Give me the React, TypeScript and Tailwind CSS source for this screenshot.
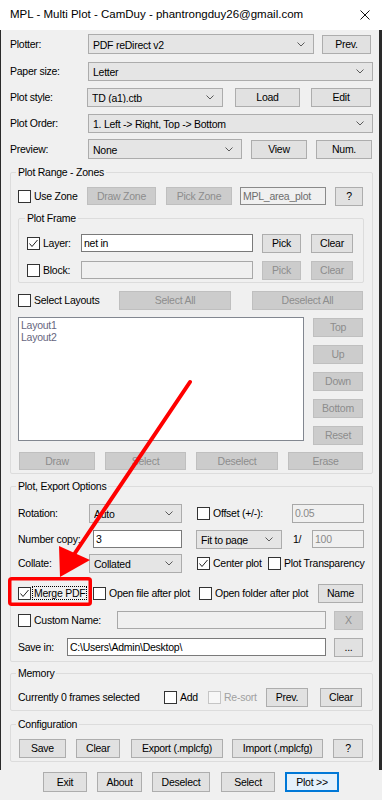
import React from "react";

type Kids = { children?: React.ReactNode };

function Btn({
  w,
  h = "h-[19px]",
  disabled,
  className = "",
  children,
}: Kids & { w: string; h?: string; disabled?: boolean; className?: string }) {
  return (
    <button
      type="button"
      className={`${w} ${h} ${className} flex shrink-0 items-center justify-center border leading-none ${
        disabled
          ? "border-[#bfbfbf] bg-[#cccccc] text-[#8d8d8d]"
          : "border-[#adadad] bg-[#e1e1e1] text-black"
      }`}
    >
      {children}
    </button>
  );
}

function Combo({ w, h = "h-[19px]", text }: { w: string; h?: string; text: string }) {
  return (
    <div className={`${w} ${h} flex shrink-0 items-center border border-[#acacac] bg-[#e5e5e5] pl-[4px] pr-[8px]`}>
      <span className="flex-1 truncate pt-[2px] leading-none">{text}</span>
      <svg width="8" height="5" viewBox="0 0 8 5" className="shrink-0">
        <polyline points="0.5,0.5 4,4 7.5,0.5" fill="none" stroke="#5a5a5a" strokeWidth="1" />
      </svg>
    </div>
  );
}

function TextBox({
  w,
  h = "h-[18px]",
  text = "",
  disabled,
}: {
  w: string;
  h?: string;
  text?: string;
  disabled?: boolean;
}) {
  return (
    <div
      className={`${w} ${h} flex shrink-0 items-center border pl-[2px] leading-none ${
        disabled ? "border-[#a8a8a8] bg-[#f0f0f0] text-[#8a8a8a]" : "border-[#7a7a7a] bg-white text-black"
      }`}
    >
      {text}
    </div>
  );
}

function Check({ checked, disabled }: { checked?: boolean; disabled?: boolean }) {
  return (
    <span
      className={`flex h-[13px] w-[13px] shrink-0 items-center justify-center border ${
        disabled ? "border-[#c5c5c5] bg-[#f7f7f7]" : "border-[#333333] bg-white"
      }`}
    >
      {checked && (
        <svg width="11" height="11" viewBox="0 0 11 11">
          <polyline points="1.5,5.5 4,8.5 9.5,2" fill="none" stroke="#222" strokeWidth="1" />
        </svg>
      )}
    </span>
  );
}

function CheckLabel({
  w = "",
  label,
  checked,
  disabled,
  focus,
}: {
  w?: string;
  label: string;
  checked?: boolean;
  disabled?: boolean;
  focus?: boolean;
}) {
  return (
    <div className={`${w} flex shrink-0 items-center`}>
      <Check checked={checked} disabled={disabled} />
      {focus ? (
        <span className="ml-[1px] border border-dotted border-black px-[1px] leading-[12px]">{label}</span>
      ) : (
        <span className={`ml-[3px] leading-none ${disabled ? "text-[#a0a0a0]" : ""}`}>{label}</span>
      )}
    </div>
  );
}

function Group({ title, className = "", children }: Kids & { title: string; className?: string }) {
  return (
    <fieldset className={`rounded-[2px] border border-[#dcdcdc] ${className}`}>
      <legend className="-ml-[2px] px-[2px] leading-[12px]">{title}</legend>
      {children}
    </fieldset>
  );
}

function Label({ w, children }: Kids & { w: string }) {
  return <span className={`${w} shrink-0 leading-none`}>{children}</span>;
}

export default function App() {
  return (
    <div className="relative h-[800px] w-[382px] overflow-hidden bg-[#f0f0f0] font-['Liberation_Sans',Arial,sans-serif] text-[10.5px] tracking-[-0.25px] text-black">
      {/* title bar */}
      <div className="flex h-[30px] items-center bg-white pl-[10px] pr-[12px] text-[11.5px] tracking-normal">
        <span>MPL - Multi Plot - CamDuy - phantrongduy26@gmail.com</span>
        <svg width="10" height="10" viewBox="0 0 10 10" className="ml-auto">
          <path d="M0.5 0.5 L9.5 9.5 M9.5 0.5 L0.5 9.5" stroke="#111" strokeWidth="1" />
        </svg>
      </div>

      <div className="flex h-[740px] flex-col border-l border-r-[3px] border-[#2a2a2a] pl-[9px]">
        {/* plotter settings */}
        <div className="mt-[4px] flex h-[20px] items-center">
          <Label w="w-[78px]">Plotter:</Label>
          <Combo w="w-[226px]" h="h-[20px]" text="PDF reDirect v2" />
          <Btn w="w-[49px]" className="ml-[8px]">Prev.</Btn>
        </div>
        <div className="mt-[7px] flex h-[20px] items-center">
          <Label w="w-[78px]">Paper size:</Label>
          <Combo w="w-[285px]" text="Letter" />
        </div>
        <div className="mt-[6px] flex h-[20px] items-center">
          <Label w="w-[77px]">Plot style:</Label>
          <Combo w="w-[136px]" text="TD (a1).ctb" />
          <Btn w="w-[65px]" className="ml-[12px]">Load</Btn>
          <Btn w="w-[60px]" className="ml-[11px]">Edit</Btn>
        </div>
        <div className="mt-[6px] flex h-[20px] items-center">
          <Label w="w-[78px]">Plot Order:</Label>
          <Combo w="w-[285px]" text="1. Left -> Right, Top -> Bottom" />
        </div>
        <div className="mt-[6px] flex h-[20px] items-center">
          <Label w="w-[78px]">Preview:</Label>
          <Combo w="w-[154px]" h="h-[20px]" text="None" />
          <Btn w="w-[56px]" className="ml-[9px]">View</Btn>
          <Btn w="w-[56px]" className="ml-[9px]">Num.</Btn>
        </div>

        {/* Plot Range - Zones */}
        <Group title="Plot Range - Zones" className="mt-[7px] w-[363px] px-[7px] pb-[3px]">
          <div className="mt-[8px] flex h-[20px] items-center">
            <CheckLabel w="w-[69px]" label="Use Zone" />
            <Btn w="w-[69px]" h="h-[18px]" disabled>Draw Zone</Btn>
            <Btn w="w-[66px]" h="h-[18px]" disabled className="ml-[10px]">Pick Zone</Btn>
            <div className="ml-[8px] flex h-[18px] w-[86px] shrink-0 items-center border border-[#8a8a8a] bg-[#f0f0f0] pl-[2px] leading-none text-[#6d6d6d]">
              MPL_area_plot
            </div>
            <Btn w="w-[28px]" className="ml-[9px]">?</Btn>
          </div>

          <Group title="Plot Frame" className="mt-[6px] w-[346px] px-[8px] pb-[2px]">
            <div className="mt-[9px] flex h-[20px] items-center">
              <CheckLabel w="w-[54px]" label="Layer:" checked />
              <TextBox w="w-[172px]" text="net in" />
              <Btn w="w-[39px]" className="ml-[9px]">Pick</Btn>
              <Btn w="w-[42px]" className="ml-[10px]">Clear</Btn>
            </div>
            <div className="mt-[7px] flex h-[20px] items-center">
              <CheckLabel w="w-[54px]" label="Block:" />
              <TextBox w="w-[172px]" disabled />
              <Btn w="w-[39px]" disabled className="ml-[9px]">Pick</Btn>
              <Btn w="w-[42px]" disabled className="ml-[10px]">Clear</Btn>
            </div>
          </Group>

          <div className="mt-[7px] flex h-[20px] items-center">
            <CheckLabel w="w-[101px]" label="Select Layouts" />
            <Btn w="w-[112px]" disabled>Select All</Btn>
            <Btn w="w-[111px]" disabled className="ml-[21px]">Deselect All</Btn>
          </div>

          <div className="mt-[7px] flex">
            <div className="h-[124px] w-[286px] shrink-0 border border-[#828790] bg-white px-[2px] pt-[1px] leading-[12px] text-[#66667e]">
              <div>Layout1</div>
              <div>Layout2</div>
            </div>
            <div className="ml-[9px] mt-[1px] flex flex-col gap-[8px]">
              <Btn w="w-[50px]" disabled>Top</Btn>
              <Btn w="w-[50px]" disabled>Up</Btn>
              <Btn w="w-[50px]" disabled>Down</Btn>
              <Btn w="w-[50px]" disabled>Bottom</Btn>
              <Btn w="w-[50px]" disabled>Reset</Btn>
            </div>
          </div>

          <div className="mt-[7px] flex h-[18px] items-center">
            <Btn w="w-[76px]" h="h-[18px]" disabled className="ml-[1px]">Draw</Btn>
            <Btn w="w-[81px]" h="h-[18px]" disabled className="ml-[10px]">Select</Btn>
            <Btn w="w-[82px]" h="h-[18px]" disabled className="ml-[10px]">Deselect</Btn>
            <Btn w="w-[75px]" h="h-[18px]" disabled className="ml-[10px]">Erase</Btn>
          </div>
        </Group>

        {/* Plot, Export Options */}
        <Group title="Plot, Export Options" className="mt-[6px] w-[363px] px-[7px] pb-[4px]">
          <div className="mt-[11px] flex h-[20px] items-center">
            <Label w="w-[71px]">Rotation:</Label>
            <Combo w="w-[93px]" text="Auto" />
            <div className="ml-[15px]">
              <CheckLabel w="w-[95px]" label="Offset (+/-):" />
            </div>
            <TextBox w="w-[72px]" h="h-[19px]" text="0.05" disabled />
          </div>
          <div className="mt-[6px] flex h-[20px] items-center">
            <Label w="w-[75px]">Number copy:</Label>
            <TextBox w="w-[89px]" text="3" />
            <div className="ml-[14px]">
              <Combo w="w-[86px]" text="Fit to page" />
            </div>
            <span className="ml-[11px] w-[19px] leading-none">1/</span>
            <TextBox w="w-[52px]" text="100" disabled />
          </div>
          <div className="mt-[4px] flex h-[20px] items-center">
            <Label w="w-[71px]">Collate:</Label>
            <Combo w="w-[93px]" text="Collated" />
            <div className="ml-[15px]">
              <CheckLabel w="w-[71px]" label="Center plot" checked />
            </div>
            <CheckLabel label="Plot Transparency" />
          </div>
          <div className="mt-[10px] flex h-[20px] items-center">
            <CheckLabel w="w-[75px]" label="Merge PDF" checked focus />
            <CheckLabel w="w-[106px]" label="Open file after plot" />
            <CheckLabel label="Open folder after plot" />
            <Btn w="w-[45px]" className="ml-auto mr-[2px]">Name</Btn>
          </div>
          <div className="mt-[7px] flex h-[20px] items-center">
            <CheckLabel w="w-[99px]" label="Custom Name:" />
            <TextBox w="w-[209px]" disabled />
            <Btn w="w-[29px]" disabled className="ml-[8px]">X</Btn>
          </div>
          <div className="mt-[7px] flex h-[20px] items-center">
            <Label w="w-[49px]">Save in:</Label>
            <TextBox w="w-[259px]" text="C:\Users\Admin\Desktop\" />
            <Btn w="w-[29px]" className="ml-[8px]">...</Btn>
          </div>
        </Group>

        {/* Memory */}
        <Group title="Memory" className="mt-[5px] w-[363px] px-[7px] pb-[3px]">
          <div className="mt-[9px] flex h-[19px] items-center">
            <Label w="w-[146px]">Currently 0 frames selected</Label>
            <CheckLabel w="w-[44px]" label="Add" />
            <CheckLabel w="w-[58px]" label="Re-sort" disabled />
            <Btn w="w-[42px]">Prev.</Btn>
            <Btn w="w-[42px]" className="ml-[12px]">Clear</Btn>
          </div>
        </Group>

        {/* Configuration */}
        <Group title="Configuration" className="mt-[7px] w-[363px] px-[7px] pb-[3px]">
          <div className="mt-[9px] flex h-[19px] items-center">
            <Btn w="w-[47px]" className="ml-[1px]">Save</Btn>
            <Btn w="w-[44px]" className="ml-[10px]">Clear</Btn>
            <Btn w="w-[92px]" className="ml-[11px]">Export (.mplcfg)</Btn>
            <Btn w="w-[91px]" className="ml-[9px]">Import (.mplcfg)</Btn>
            <Btn w="w-[30px]" className="ml-[10px]">?</Btn>
          </div>
        </Group>
      </div>

      {/* dialog buttons */}
      <div className="flex pl-[43px] pt-[2px]">
        <Btn w="w-[44px]" h="h-[20px]">Exit</Btn>
        <Btn w="w-[45px]" h="h-[20px]" className="ml-[10px]">About</Btn>
        <Btn w="w-[58px]" h="h-[20px]" className="ml-[10px]">Deselect</Btn>
        <Btn w="w-[54px]" h="h-[20px]" className="ml-[11px]">Select</Btn>
        <button
          type="button"
          className="ml-[10px] flex h-[20px] w-[54px] items-center justify-center border-2 border-[#0078d7] bg-[#e5f1fb] leading-none"
        >
          Plot &gt;&gt;
        </button>
      </div>

      {/* red annotation */}
      <svg
        className="pointer-events-none absolute left-0 top-0"
        width="382"
        height="800"
        viewBox="0 0 382 800"
      >
        <line x1="190" y1="382" x2="75" y2="553" stroke="#ff0000" strokeWidth="4" strokeLinecap="round" />
        <polygon points="60,577 59,546 90,560" fill="#ff0000" />
        <rect x="9.75" y="578.75" width="80.5" height="25.5" rx="2" fill="none" stroke="#ff0000" strokeWidth="3.5" />
      </svg>
    </div>
  );
}
